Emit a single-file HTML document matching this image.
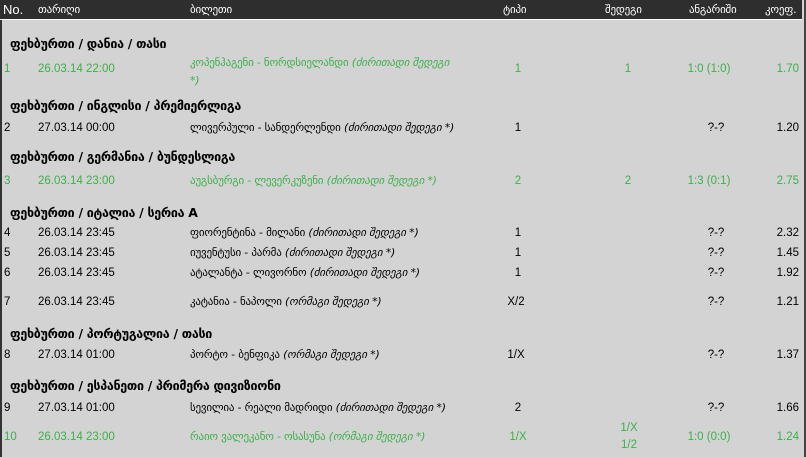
<!DOCTYPE html>
<html><head><meta charset="utf-8">
<style>
html,body{margin:0;padding:0;width:806px;height:457px;overflow:hidden;background:#fff}
#w{position:absolute;left:0;top:0;width:802px;height:457px;background:#d3d3d3;border-left:2px solid #333;border-right:2px solid #444}
#h{position:absolute;left:0;top:0;width:802px;height:19px;background:#2e2e2e;border-bottom:1px solid #fff}
.t{position:absolute;font-family:"Liberation Sans","DejaVu Sans",sans-serif;font-size:11.5px;color:#000;white-space:nowrap;line-height:14px}
.g{color:#3cb04a}
.hd{color:#fff;font-size:12px}
.geo{font-family:"DejaVu Sans",sans-serif;font-size:11px;letter-spacing:-0.2px}
.b{font-weight:bold;font-size:12.5px;font-family:"DejaVu Sans",sans-serif;letter-spacing:-0.3px}
.i{font-style:italic}
.c{text-align:center;width:60px;margin-left:-30px}
.r{text-align:right;width:60px;margin-left:-60px}
</style></head><body>
<div id="w"></div>
<div id="h"></div>
<div class="t hd" style="left:3px;top:3px;font-size:13px">No.</div>
<div class="t hd geo" style="left:38px;top:3px;font-size:11px">თარიღი</div>
<div class="t hd geo" style="left:190px;top:3px;font-size:11px">ბილეთი</div>
<div class="t hd geo" style="left:503px;top:3px;font-size:11px">ტიპი</div>
<div class="t hd geo" style="left:605px;top:3px;font-size:11px">შედეგი</div>
<div class="t hd geo" style="left:689px;top:3px;font-size:11px">ანგარიში</div>
<div class="t hd geo" style="left:765px;top:3px;font-size:11px">კოეფ.</div>

<div class="t b" style="left:10px;top:37px">ფეხბურთი / დანია / თასი</div>
<div class="t g" style="left:4px;top:62px">1</div>
<div class="t g" style="left:38px;top:62px">26.03.14 22:00</div>
<div class="t g geo" style="left:190px;top:54px;line-height:18px">კოპენჰაგენი - ნორდსიელანდი <span class="i">(ძირითადი შედეგი<br>*)</span></div>
<div class="t g c" style="left:518px;top:62px">1</div>
<div class="t g c" style="left:628px;top:62px">1</div>
<div class="t g c" style="left:709px;top:62px;width:80px;margin-left:-40px">1:0 (1:0)</div>
<div class="t g r" style="left:799px;top:62px">1.70</div>

<div class="t b" style="left:10px;top:99px">ფეხბურთი / ინგლისი / პრემიერლიგა</div>
<div class="t" style="left:4px;top:121px">2</div>
<div class="t" style="left:38px;top:121px">27.03.14 00:00</div>
<div class="t geo" style="left:190px;top:121px">ლივერპული - სანდერლენდი <span class="i">(ძირითადი შედეგი *)</span></div>
<div class="t c" style="left:518px;top:121px">1</div>
<div class="t c" style="left:716px;top:121px">?-?</div>
<div class="t r" style="left:799px;top:121px">1.20</div>

<div class="t b" style="left:10px;top:150px">ფეხბურთი / გერმანია / ბუნდესლიგა</div>
<div class="t g" style="left:4px;top:174px">3</div>
<div class="t g" style="left:38px;top:174px">26.03.14 23:00</div>
<div class="t g geo" style="left:190px;top:174px">აუგსბურგი - ლევერკუზენი <span class="i">(ძირითადი შედეგი *)</span></div>
<div class="t g c" style="left:518px;top:174px">2</div>
<div class="t g c" style="left:628px;top:174px">2</div>
<div class="t g c" style="left:709px;top:174px;width:80px;margin-left:-40px">1:3 (0:1)</div>
<div class="t g r" style="left:799px;top:174px">2.75</div>

<div class="t b" style="left:10px;top:206px">ფეხბურთი / იტალია / სერია A</div>
<div class="t" style="left:4px;top:226px">4</div>
<div class="t" style="left:38px;top:226px">26.03.14 23:45</div>
<div class="t geo" style="left:190px;top:226px">ფიორენტინა - მილანი <span class="i">(ძირითადი შედეგი *)</span></div>
<div class="t c" style="left:518px;top:226px">1</div>
<div class="t c" style="left:716px;top:226px">?-?</div>
<div class="t r" style="left:799px;top:226px">2.32</div>

<div class="t" style="left:4px;top:246px">5</div>
<div class="t" style="left:38px;top:246px">26.03.14 23:45</div>
<div class="t geo" style="left:190px;top:246px">იუვენტუსი - პარმა <span class="i">(ძირითადი შედეგი *)</span></div>
<div class="t c" style="left:518px;top:246px">1</div>
<div class="t c" style="left:716px;top:246px">?-?</div>
<div class="t r" style="left:799px;top:246px">1.45</div>

<div class="t" style="left:4px;top:266px">6</div>
<div class="t" style="left:38px;top:266px">26.03.14 23:45</div>
<div class="t geo" style="left:190px;top:266px">ატალანტა - ლივორნო <span class="i">(ძირითადი შედეგი *)</span></div>
<div class="t c" style="left:518px;top:266px">1</div>
<div class="t c" style="left:716px;top:266px">?-?</div>
<div class="t r" style="left:799px;top:266px">1.92</div>

<div class="t" style="left:4px;top:295px">7</div>
<div class="t" style="left:38px;top:295px">26.03.14 23:45</div>
<div class="t geo" style="left:190px;top:295px">კატანია - ნაპოლი <span class="i">(ორმაგი შედეგი *)</span></div>
<div class="t c" style="left:516px;top:295px">X/2</div>
<div class="t c" style="left:716px;top:295px">?-?</div>
<div class="t r" style="left:799px;top:295px">1.21</div>

<div class="t b" style="left:10px;top:327px">ფეხბურთი / პორტუგალია / თასი</div>
<div class="t" style="left:4px;top:348px">8</div>
<div class="t" style="left:38px;top:348px">27.03.14 01:00</div>
<div class="t geo" style="left:190px;top:348px">პორტო - ბენფიკა <span class="i">(ორმაგი შედეგი *)</span></div>
<div class="t c" style="left:516px;top:348px">1/X</div>
<div class="t c" style="left:716px;top:348px">?-?</div>
<div class="t r" style="left:799px;top:348px">1.37</div>

<div class="t b" style="left:10px;top:379px">ფეხბურთი / ესპანეთი / პრიმერა დივიზიონი</div>
<div class="t" style="left:4px;top:401px">9</div>
<div class="t" style="left:38px;top:401px">27.03.14 01:00</div>
<div class="t geo" style="left:190px;top:401px">სევილია - რეალი მადრიდი <span class="i">(ძირითადი შედეგი *)</span></div>
<div class="t c" style="left:518px;top:401px">2</div>
<div class="t c" style="left:716px;top:401px">?-?</div>
<div class="t r" style="left:799px;top:401px">1.66</div>

<div class="t g" style="left:4px;top:430px">10</div>
<div class="t g" style="left:38px;top:430px">26.03.14 23:00</div>
<div class="t g geo" style="left:190px;top:430px">რაიო ვალეკანო - ოსასუნა <span class="i">(ორმაგი შედეგი *)</span></div>
<div class="t g c" style="left:518px;top:430px">1/X</div>
<div class="t g c" style="left:629px;top:421px">1/X</div>
<div class="t g c" style="left:629px;top:438px">1/2</div>
<div class="t g c" style="left:709px;top:430px;width:80px;margin-left:-40px">1:0 (0:0)</div>
<div class="t g r" style="left:799px;top:430px">1.24</div>
</body></html>
